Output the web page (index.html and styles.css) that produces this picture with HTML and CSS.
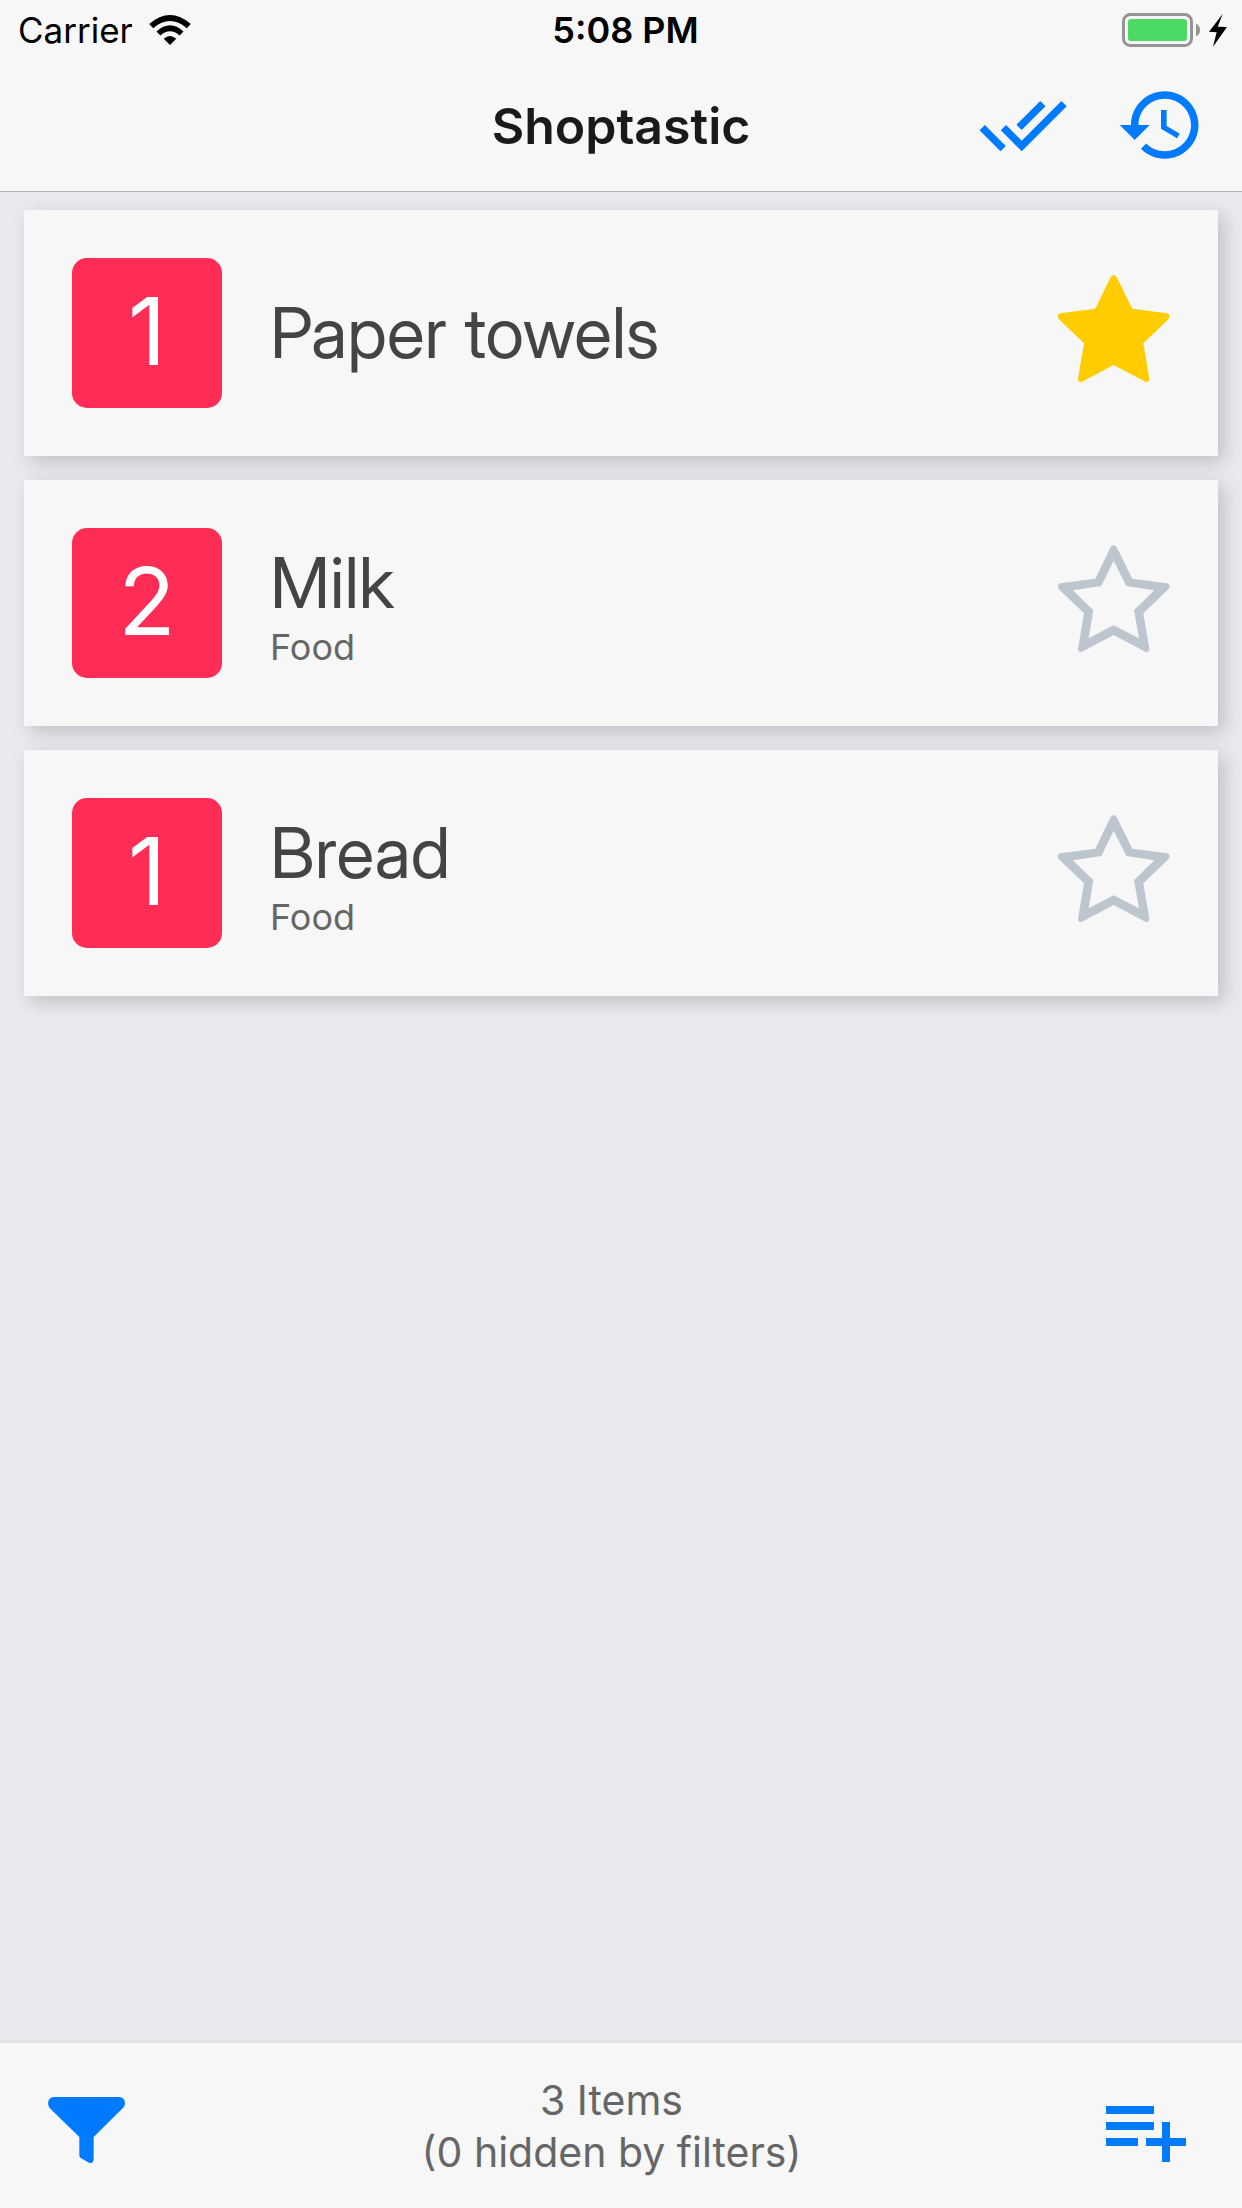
FILE: index.html
```html
<!DOCTYPE html>
<html lang="en">
<head>
  <meta charset="utf-8">
  <meta name="viewport" content="width=device-width, initial-scale=1">
  <title>Shoptastic</title>
  <link rel="stylesheet" href="styles.css">
</head>
<body>
  <div class="app">
    <header class="header">
      <div class="status">
        <div class="status-left">
          <span>Carrier</span>
          <svg class="wifi" viewBox="0 0 126 91" aria-hidden="true">
            <path d="M0 27Q63 -27 126 27L114 40Q63 -3 12 40Z"/>
            <path d="M22 50Q63 12 104 50L92 62Q63 37 34 62Z"/>
            <path d="M44 72Q63 55 82 72L63 91Z"/>
          </svg>
        </div>
        <time class="clock">5:08 PM</time>
        <svg class="battery" viewBox="546 39 315 102" role="img" aria-label="Battery full, charging">
          <rect x="550.5" y="43.500" width="204" height="93" rx="20" fill="none" stroke="#949494" stroke-width="9"/>
          <rect x="564" y="57" width="177" height="66" rx="10" fill="#4cd964"/>
          <path d="M768 71Q780 76 780 90T768 109Z" fill="#949494"/>
          <path d="M848 42L833 80L861 81L819 140L830 97L807 95Z" fill="#000"/>
        </svg>
      </div>
      <div class="navbar">
        <h1 class="title">Shoptastic</h1>
        <div class="actions">
          <button class="icon-button" type="button" aria-label="Complete all">
            <svg class="nav-icon" viewBox="0 0 24 24" aria-hidden="true"><path d="M18 7l-1.410-1.410-6.340 6.340 1.410 1.410L18 7zm4.240-1.410L11.660 16.170 7.480 12l-1.410 1.410L11.660 19l12-12-1.420-1.410zM.41 13.410L6 19l1.410-1.410L1.830 12 .41 13.410z"/></svg>
          </button>
          <button class="icon-button" type="button" aria-label="History">
            <svg class="nav-icon" viewBox="0 0 24 24" aria-hidden="true"><path d="M13 3c-4.970 0-9 4.030-9 9H1l3.890 3.890.07.14L9 12H6c0-3.870 3.130-7 7-7s7 3.130 7 7-3.130 7-7 7c-1.930 0-3.680-.79-4.940-2.060l-1.420 1.420C8.270 19.990 10.510 21 13 21c4.970 0 9-4.030 9-9s-4.030-9-9-9zm-1 5v5l4.280 2.540.72-1.210-3.500-2.080V8H12z"/></svg>
          </button>
        </div>
      </div>
    </header>

    <main class="content">
      <ul class="list">
        <li class="card">
          <span class="quantity">1</span>
          <div class="details">
            <h2 class="name">Paper towels</h2>
          </div>
          <button class="icon-button" type="button" aria-label="Remove star from Paper towels" aria-pressed="true">
            <svg class="star star-on" viewBox="234 249 336 360" aria-hidden="true"><path d="M391 263Q401 247 411 263L457 356L561 370Q574 375 566 387L490 460L508 566Q507 579 496 575L401 525L306 575Q295 579 294 566L312 460L236 387Q228 375 241 370L346 356Z"/></svg>
          </button>
        </li>
        <li class="card">
          <span class="quantity">2</span>
          <div class="details">
            <h2 class="name">Milk</h2>
            <p class="category">Food</p>
          </div>
          <button class="icon-button" type="button" aria-label="Star Milk" aria-pressed="false">
            <svg class="star" viewBox="234 249 336 360" aria-hidden="true"><path fill-rule="evenodd" d="M391 263Q401 247 411 263L457 356L561 370Q574 375 566 387L490 460L508 566Q507 579 496 575L401 525L306 575Q295 579 294 566L312 460L236 387Q228 375 241 370L346 356ZM401 302L364 378L279 391L340 451L326 535L401 496L477 535L462 451L523 391L439 378Z"/></svg>
          </button>
        </li>
        <li class="card">
          <span class="quantity">1</span>
          <div class="details">
            <h2 class="name">Bread</h2>
            <p class="category">Food</p>
          </div>
          <button class="icon-button" type="button" aria-label="Star Bread" aria-pressed="false">
            <svg class="star" viewBox="234 249 336 360" aria-hidden="true"><path fill-rule="evenodd" d="M391 263Q401 247 411 263L457 356L561 370Q574 375 566 387L490 460L508 566Q507 579 496 575L401 525L306 575Q295 579 294 566L312 460L236 387Q228 375 241 370L346 356ZM401 302L364 378L279 391L340 451L326 535L401 496L477 535L462 451L523 391L439 378Z"/></svg>
          </button>
        </li>
      </ul>
    </main>

    <footer class="toolbar">
      <button class="icon-button" type="button" aria-label="Filter items">
        <svg class="funnel" viewBox="144 231 231 198" aria-hidden="true"><path d="M162 231H357C373 231 380 248 371 262L281 351V418Q280 432 267 428L241 413Q238 411 238 406V351L149 264C139 250 146 231 162 231Z"/></svg>
      </button>
      <p class="summary">3 Items<br>(0 hidden by filters)</p>
      <button class="icon-button" type="button" aria-label="Add items">
        <svg class="add" viewBox="0 0 24 24" aria-hidden="true"><path d="M14 10H2v2h12v-2zm0-4H2v2h12V6zm4 8v-4h-2v4h-4v2h4v4h2v-4h4v-2h-4zM2 16h8v-2H2v2z"/></svg>
      </button>
    </footer>
  </div>
</body>
</html>
```
FILE: styles.css
```css
* {
  box-sizing: border-box;
}

body {
  margin: 0;
  background: #e9e9ef;
  color: #444;
  font-family: Inter, "Liberation Sans", sans-serif;
}

h1,
h2,
p,
ul {
  margin: 0;
  padding: 0;
}

svg {
  display: block;
  fill: currentColor;
}

.app {
  display: flex;
  flex-direction: column;
  min-height: 100vh;
}

.header {
  background: #f7f7f7;
  border-bottom: 1px solid #b2b2b2;
}

.status {
  display: grid;
  grid-template-columns: 1fr auto 1fr;
  align-items: center;
  height: 60px;
  padding: 0 15px 0 18px;
  color: #000;
  font-size: 36px;
  line-height: 60px;
}

.status-left {
  display: flex;
  align-items: center;
  gap: 16px;
  font-size: 35px;
}

.wifi {
  width: 42px;
  height: 30px;
}

.clock {
  padding-left: 6px;
  font-weight: 600;
}

.battery {
  justify-self: end;
  width: 105px;
  height: 34px;
}

.navbar {
  display: grid;
  grid-template-columns: 1fr auto 1fr;
  align-items: center;
  height: 131px;
  padding: 0 36px;
}

.title {
  grid-column: 2;
  color: #1a1a1a;
  font-size: 50px;
  font-weight: 600;
  line-height: 60px;
}

.actions {
  display: flex;
  justify-content: flex-end;
  gap: 48px;
  padding-bottom: 2px;
}

.icon-button {
  flex: none;
  padding: 0;
  border: 0;
  background: none;
  color: #007aff;
  cursor: pointer;
}

.nav-icon {
  width: 90px;
  height: 90px;
}

.content {
  flex: 1;
  padding: 18px 24px 24px;
}

.list {
  display: flex;
  flex-direction: column;
  gap: 24px;
  list-style: none;
}

.card {
  display: flex;
  align-items: center;
  gap: 48px;
  padding: 48px;
  background: #f7f7f7;
  box-shadow: 6px 6px 18px rgba(0, 0, 0, 0.18);
}

.quantity {
  flex: none;
  width: 150px;
  height: 150px;
  border-radius: 15px;
  background: #ff2d55;
  color: #fff;
  font-size: 94px;
  line-height: 146px;
  text-align: center;
}

.details {
  flex: 1;
  min-width: 0;
}

.name {
  font-family: "Inter Display", Inter, "Liberation Sans", sans-serif;
  font-size: 70px;
  font-weight: 400;
  line-height: 88px;
}

.category {
  color: #666;
  font-size: 36px;
  line-height: 40px;
}

.star {
  width: 112px;
  height: 120px;
  color: #bdc6cf;
}

.star-on {
  color: #fc0;
}

.toolbar {
  display: flex;
  align-items: center;
  padding: 9px 48px 0;
  min-height: 168px;
  background: #f7f7f7;
  border-top: 3px solid #e1e1e1;
}

.funnel {
  width: 77px;
  height: 66px;
}

.summary {
  flex: 1;
  padding-bottom: 8px;
  color: #666;
  font-size: 41px;
  line-height: 52px;
  text-align: center;
}

.add {
  width: 96px;
  height: 96px;
}
```
